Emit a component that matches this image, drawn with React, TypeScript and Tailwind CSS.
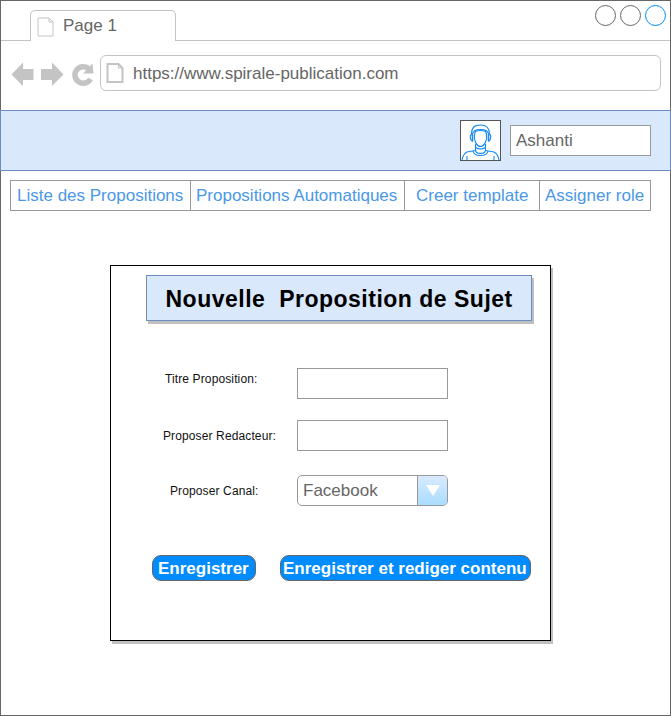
import React from "react";

function PageIcon({ className, stroke }: { className: string; stroke: number }) {
  return (
    <svg className={className} viewBox="0 0 17 20" fill="none" stroke="#c4c4c4" strokeWidth={stroke}>
      <path d="M1 1H12L16 5V19H1Z" />
      <path d="M12 1V5H16" strokeWidth="1" />
    </svg>
  );
}

function Tabs() {
  return (
    <div className="flex h-10 shrink-0">
      <div className="w-[29px] border-b border-[#c4c4c4]" />
      <div className="mt-[9px] flex h-[31px] w-[146px] items-start rounded-t-[5px] border-x border-t border-[#c4c4c4]">
        <PageIcon className="ml-[6px] mt-[6px] h-[20px] w-[17px] shrink-0" stroke={1} />
        <span className="ml-[9px] mt-[5px] whitespace-pre text-[17px] leading-5">Page 1</span>
      </div>
      <div className="flex flex-1 items-start justify-end gap-[4px] border-b border-[#c4c4c4] pr-[4px] pt-[4px]">
        <span className="size-[21px] rounded-full border border-[#666]" />
        <span className="size-[21px] rounded-full border border-[#666]" />
        <span className="size-[21px] rounded-full border border-[#008cff]" />
      </div>
    </div>
  );
}

function Toolbar() {
  return (
    <div className="flex h-[69px] shrink-0 pl-[10px] pt-[14px]">
      <svg className="mt-[7px] h-[24px] w-[84px] shrink-0" viewBox="0 0 84 24" fill="#c4c4c4">
        <path d="M0.500 12.500L12 .5V7H22.500V18H12V24Z" />
        <path d="M30 7H41V.5L52.500 12.500L41 24V18H30Z" />
        <path d="M79.500 17A8.300 8.300 0 1 1 77.500 6.500" fill="none" stroke="#c4c4c4" strokeWidth="5.500" />
        <path d="M81.500 1.500L82.500 11.500H72Z" />
      </svg>
      <div className="ml-[5px] flex h-9 w-[561px] items-center rounded-[6px] border border-[#c4c4c4]">
        <PageIcon className="ml-[5px] h-[20px] w-[18px]" stroke={2} />
        <span className="ml-[9px] pt-[2px] text-[17px] leading-5">https://www.spirale-publication.com</span>
      </div>
    </div>
  );
}

function Avatar() {
  return (
    <svg className="size-[41px] border border-[#555] bg-white" viewBox="0 0 39 39" fill="none" stroke="#1689f5" strokeWidth="1.100">
      <path d="M12 20.500C9 20 8.500 14 10.500 13C10.500 7 13 4 19.500 4S28.500 7 28.500 13C30.500 14 30 20 27 20.500" />
      <path d="M11 14.500C12 10 14 8.500 19.500 8.500S27 10 28 14.500" />
      <path d="M13.500 13L14.500 10.500Q19.500 8.500 24.500 10.500L25.500 13C26.500 20 23 25.500 19.500 25.500S12.500 20 13.500 13Z" />
      <path d="M11.500 13.500V20M27.500 13.500V20" strokeWidth="1.500" />
      <path d="M14.500 23V30M24.500 23V30M14.500 26.500Q19.500 29.500 24.500 26.500" />
      <path d="M14.500 29C14.500 33.500 24.500 33.500 24.500 29M12 30C13 36 26 36 27 30" />
      <path d="M14.500 29.500L6 31Q2 33 1 39M24.500 29.500L33 31Q37 33 38 39M6 35V39M33 35V39" />
    </svg>
  );
}

function Field({ label, pad, rowClass, children }: { label: string; pad: string; rowClass: string; children: React.ReactNode }) {
  return (
    <div className={"flex h-[31px] " + rowClass}>
      <div className={"w-[186px] shrink-0 whitespace-nowrap text-[12px] leading-4 tracking-[0.12px] text-[#111] " + pad}>{label}</div>
      {children}
    </div>
  );
}

export default function App() {
  return (
    <div className="flex h-[716px] w-[671px] flex-col border border-[#666] bg-white font-['Liberation_Sans',Arial,sans-serif] text-[#666]">
      <Tabs />
      <Toolbar />
      <header className="-mx-px flex h-[61px] shrink-0 items-start justify-end border border-[#6c8ebf] bg-[#dae8fc] pr-[19px] pt-[9px]">
        <Avatar />
        <div className="ml-[9px] mt-[5px] flex h-[31px] w-[141px] items-center border border-[#999] bg-white pl-[5px] text-[17px]">Ashanti</div>
      </header>
      <nav className="ml-[9px] mt-[9px] flex h-[31px] w-[641px] shrink-0 border border-[#999] text-[17px] leading-[29px] whitespace-nowrap text-[#4a98e8]">
        <a className="w-[180px] border-r border-[#999] pl-[6px]">Liste des Propositions</a>
        <a className="w-[214px] border-r border-[#999] pl-[5px]">Propositions Automatiques</a>
        <a className="w-[135px] border-r border-[#999] pl-[11px]">Creer template</a>
        <a className="pl-[5px]">Assigner role</a>
      </nav>
      <main className="ml-[109px] mt-[54px] h-[376px] w-[441px] border border-black bg-white shadow-[2px_3px_0_#c0c0c0]">
        <h1 className="ml-[35px] mt-[9px] flex h-[46px] w-[386px] items-center whitespace-pre border border-[#6c8ebf] bg-[#dae8fc] pl-[18.5px] pt-[3px] text-[23px] font-bold tracking-[0.5px] text-black shadow-[2px_3px_0_#c0c0c0]">Nouvelle  Proposition de Sujet</h1>
        <Field label="Titre Proposition:" pad="pl-[54px] pt-[3px]" rowClass="mt-[47px]">
          <input className="w-[151px] border border-[#999]" />
        </Field>
        <Field label="Proposer Redacteur:" pad="pl-[52px] pt-[8px]" rowClass="mt-[21px]">
          <input className="w-[151px] border border-[#999]" />
        </Field>
        <Field label="Proposer Canal:" pad="pl-[59px] pt-[8px]" rowClass="mt-[24px]">
          <div className="flex w-[151px] overflow-hidden rounded-[5px] border border-[#999] text-[17px] leading-[29px]">
            <span className="w-[119px] pl-[5px]">Facebook</span>
            <span className="flex flex-1 items-center justify-center border-l border-[#999] bg-linear-to-b from-[#d8eaff] to-[#aaddff]">
              <svg className="h-[11px] w-[14px]" viewBox="0 0 14 11" fill="white"><path d="M0 0H14L7 11Z" /></svg>
            </span>
          </div>
        </Field>
        <div className="ml-[41px] mt-[49px] flex gap-6 whitespace-nowrap text-[17px] font-bold leading-6 text-white">
          <button className="h-[26px] w-[104px] rounded-[9px] border border-[#666] bg-[#008cff] pl-[5px] pt-px text-left">Enregistrer</button>
          <button className="h-[26px] w-[251px] rounded-[9px] border border-[#666] bg-[#008cff] pl-[2px] pt-px text-left">Enregistrer et rediger contenu</button>
        </div>
      </main>
    </div>
  );
}
